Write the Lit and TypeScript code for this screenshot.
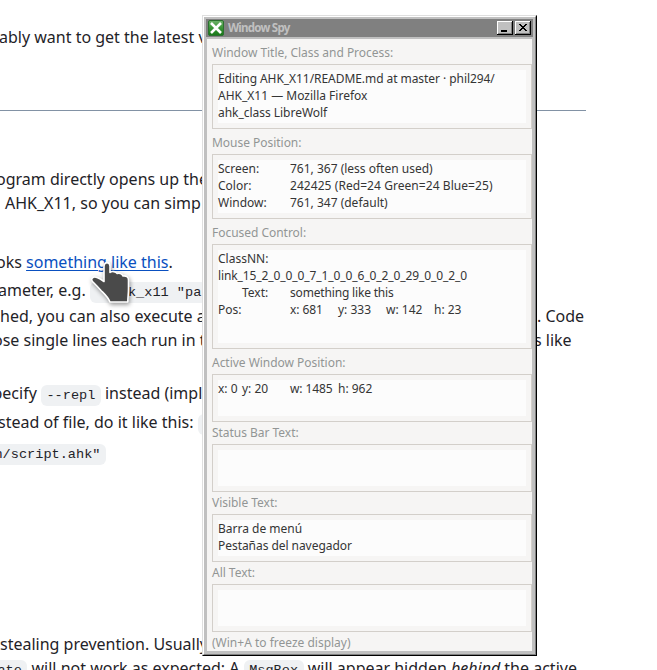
import { LitElement, html, css, svg } from "lit";
import { customElement } from "lit/decorators.js";

interface Panel {
  label: string;
  head: number;
  height: number;
  lines: string[][];
}

// A line holds cells written as "text|width|tracking"; width is the distance to the next tab stop.
const panels: Panel[] = [
  {
    label: "Window Title, Class and Process:",
    head: 25,
    height: 65,
    lines: [["Editing AHK_X11/README.md at master · phil294/||-0.06"], ["AHK_X11 — Mozilla Firefox"], ["ahk_class LibreWolf||-0.03"]],
  },
  {
    label: "Mouse Position:",
    head: 25,
    height: 65,
    lines: [
      ["Screen:|72", "761, 367 (less often used)"],
      ["Color:|72", "242425 (Red=24 Green=24 Blue=25)||0.06"],
      ["Window:|72", "761, 347 (default)"],
    ],
  },
  {
    label: "Focused Control:",
    head: 25,
    height: 105,
    lines: [
      ["ClassNN:"],
      ["link_15_2_0_0_0_7_1_0_0_6_0_2_0_29_0_0_2_0||-0.1"],
      ["|24", "Text:|48", "something like this||-0.17"],
      ["Pos:|72", "x: 681|48|-0.1", "y: 333|48", "w: 142|48", "h: 23"],
    ],
  },
  { label: "Active Window Position:", head: 25, height: 48, lines: [["x: 0|24", "y: 20|48", "w: 1485|48|-0.1", "h: 962"]] },
  { label: "Status Bar Text:", head: 22, height: 48, lines: [] },
  { label: "Visible Text:", head: 22, height: 48, lines: [["Barra de menú"], ["Pestañas del navegador||-0.05"]] },
  { label: "All Text:", head: 22, height: 48, lines: [] },
];

@customElement("doc-page")
class DocPage extends LitElement {
  static styles = css`
    :host { display: block; height: 670px; overflow: hidden; background: #fff; color: #1f2328;
      font: 16px/24px "Noto Sans", sans-serif; }
    .row { height: 24px; white-space: pre; display: flex; }
    .first { margin-top: 25px; }
    hr { margin: 61px 71px 56px 0; border: 0; height: 1px; background: #8292a5; }
    .link-row { margin-top: 35px; }
    .item { margin-top: 4px; }
    .tight { margin-top: 2px; }
    .option { margin-top: 29px; }
    .option + .row { margin-top: 5px; }
    .path { margin-top: 6px; }
    .note { margin-top: 168px; }
    .covered { width: 537px; flex: none; overflow: hidden; }
    .lead { margin-left: 5px; }
    .out1 { margin-left: -1px; }
    .out2 { margin-left: -2px; }
    .out3 { margin-left: -3px; }
    .out4 { margin-left: -4px; }
    .out8 { margin-left: -7.5px; }
    .shift { display: inline-block; margin-left: -7px; }
    a { color: #0a50c0; text-decoration: underline; text-underline-offset: 2px; text-decoration-thickness: 1px; }
    code { font: 13.6px "Liberation Mono", monospace; padding: 3.2px 5.44px; background: #eff1f3; border-radius: 6px; }
    .flush { margin-left: -5px; }
    .flush-more { margin-left: -11px; }
  `;
  render() {
    return html`
      <div class="row first"><span class="out1">ably want to get the latest v</span></div>
      <hr />
      <div class="row"><span class="out4">ogram directly opens up the</span></div>
      <div class="row"><span class="lead">AHK_X11, so you can simp</span></div>
      <div class="row link-row"><span class="out4">oks <a>something like this</a>.</span></div>
      <div class="row item"><span class="out2">ameter, e.g. <code>  ahk_x11 "pa</code></span></div>
      <div class="row tight"><span class="covered">hed, you can also execute a</span><span>. Code</span></div>
      <div class="row"><span class="covered"><span class="shift">ose single lines each run in t</span></span><span class="out3">s like</span></div>
      <div class="row option"><span class="out8">pecify <code>--repl</code> instead (impl</span></div>
      <div class="row"><span class="out2">stead of file, do it like this: <code>a</code></span></div>
      <div class="row path"><span><code class="flush-more">n/script.ahk"</code></span></div>
      <div class="row note"><span>stealing prevention. Usually</span></div>
      <div class="row"><span class="out3"><code class="flush">ate</code> will not work as expected: A <code>MsgBox</code> will appear hidden <em>behind</em> the active</span></div>
    `;
  }
}

@customElement("spy-window")
class SpyWindow extends LitElement {
  static styles = css`
    :host { display: block; box-sizing: border-box; width: 335px; height: 641px; background: #c0c0c0;
      border: 1px solid; border-color: #dfdfdf #000 #000 #dfdfdf;
      font: 12px/17px "Noto Sans", sans-serif; color: #353535; }
    .bevel { box-sizing: border-box; height: 639px; border: 1px solid; border-color: #fff #808080 #808080 #fff; padding: 2px; }
    .title { height: 18px; display: flex; align-items: center; gap: 2px; padding: 0 2px; background: #808080;
      color: #c0c0c0; font-size: 11.5px; letter-spacing: -0.75px; }
    .title b { flex: 1; padding: 0 0 1px 2px; font-weight: 700; }
    .icon { display: block; }
    .btn { display: block; }
    .body { margin: 2px 1px 0; height: 612px; background: #f6f5f4; padding-left: 5px; }
    .label { box-sizing: border-box; color: #929595; letter-spacing: -0.03px; }
    .h25 { height: 25px; padding-top: 5px; }
    .h22 { height: 22px; padding-top: 2px; }
    .box { box-sizing: border-box; border: 1px solid #d3cfca; padding: 5px; }
    .text { height: 100%; background: #fcfcfc; }
    .line { display: flex; height: 17px; white-space: pre; }
    .cell { flex: none; }
    .foot { height: 20px; padding-top: 2px; letter-spacing: 0; }
  `;
  private line(cells: string[]) {
    return html`<div class="line">${cells.map((c) => {
      const [text, w, track] = c.split("|");
      return html`<span class="cell" style="${w ? `width:${w}px;` : ""}${track ? `letter-spacing:${track}px` : ""}">${text}</span>`;
    })}</div>`;
  }
  private button(glyph: unknown) {
    return html`<svg class="btn" width="16" height="14" shape-rendering="crispEdges">
      <rect width="16" height="14" fill="#000" /><rect width="15" height="13" fill="#fff" />
      <rect x="1" y="1" width="14" height="12" fill="#808080" /><rect x="1" y="1" width="13" height="11" fill="#c0c0c0" />
      ${glyph}
    </svg>`;
  }
  render() {
    return html`<div class="bevel">
      <div class="title">
        <svg class="icon" width="16" height="16" viewBox="0 0 16 16">
          <defs><linearGradient id="g" x2="0" y2="1"><stop stop-color="#6fb36b" /><stop offset=".5" stop-color="#389436" /><stop offset="1" stop-color="#177717" /></linearGradient></defs>
          <rect x=".5" y=".5" width="15" height="15" rx="1.5" fill="url(#g)" stroke="#2b7030" />
          <path d="M3 3L13 13M13 3L3 13" stroke="#fff" stroke-width="2.6" />
        </svg>
        <b>Window Spy</b>
        ${this.button(svg`<rect x="4" y="9" width="6" height="2" />`)}
        ${this.button(svg`<path d="M4 3h2v1h1v1h2v-1h1v-1h2v1h-1v1h-1v1h-1v1h1v1h1v1h1v1h-2v-1h-1v-1h-2v1h-1v1h-2v-1h1v-1h1v-1h1v-1h-1v-1h-1v-1h-1z" />`)}
      </div>
      <div class="body">
        ${panels.map(
          (p) => html`<div class="label h${p.head}">${p.label}</div>
            <div class="box" style="height:${p.height}px"><div class="text">${p.lines.map((l) => this.line(l))}</div></div>`
        )}
        <div class="label foot">(Win+A to freeze display)</div>
      </div>
    </div>`;
  }
}

@customElement("app-root")
class AppRoot extends LitElement {
  static styles = css`
    :host { display: block; position: relative; width: 657px; height: 670px; overflow: hidden; }
    .window { position: absolute; left: 202px; top: 15px; }
    .cursor { position: absolute; left: 86px; top: 258px; filter: drop-shadow(1px 2px 2px #0006); }
  `;
  render() {
    return html`
      <doc-page></doc-page>
      <spy-window class="window"></spy-window>
      <svg class="cursor" width="48" height="48" viewBox="0 0 48 48">
        <path d="M18 8C18 3.500 24 3.500 24 8V14.500C26 12.800 30 13.500 31 15.500C33 14.500 36 15.500 37 18C40 17.500 42.500 19 42.500 22V31C42.500 36 41.800 39 41.800 44H24C22 39 19.500 37 15 32.500C12 29 9.500 26.500 6.500 23.500C4 20.500 7.500 18 11 19.500C14 20.500 16 22 18 23.500Z" fill="#4a4a4a" stroke="#fff" stroke-width="1.6" stroke-linejoin="round" />
      </svg>
    `;
  }
}
